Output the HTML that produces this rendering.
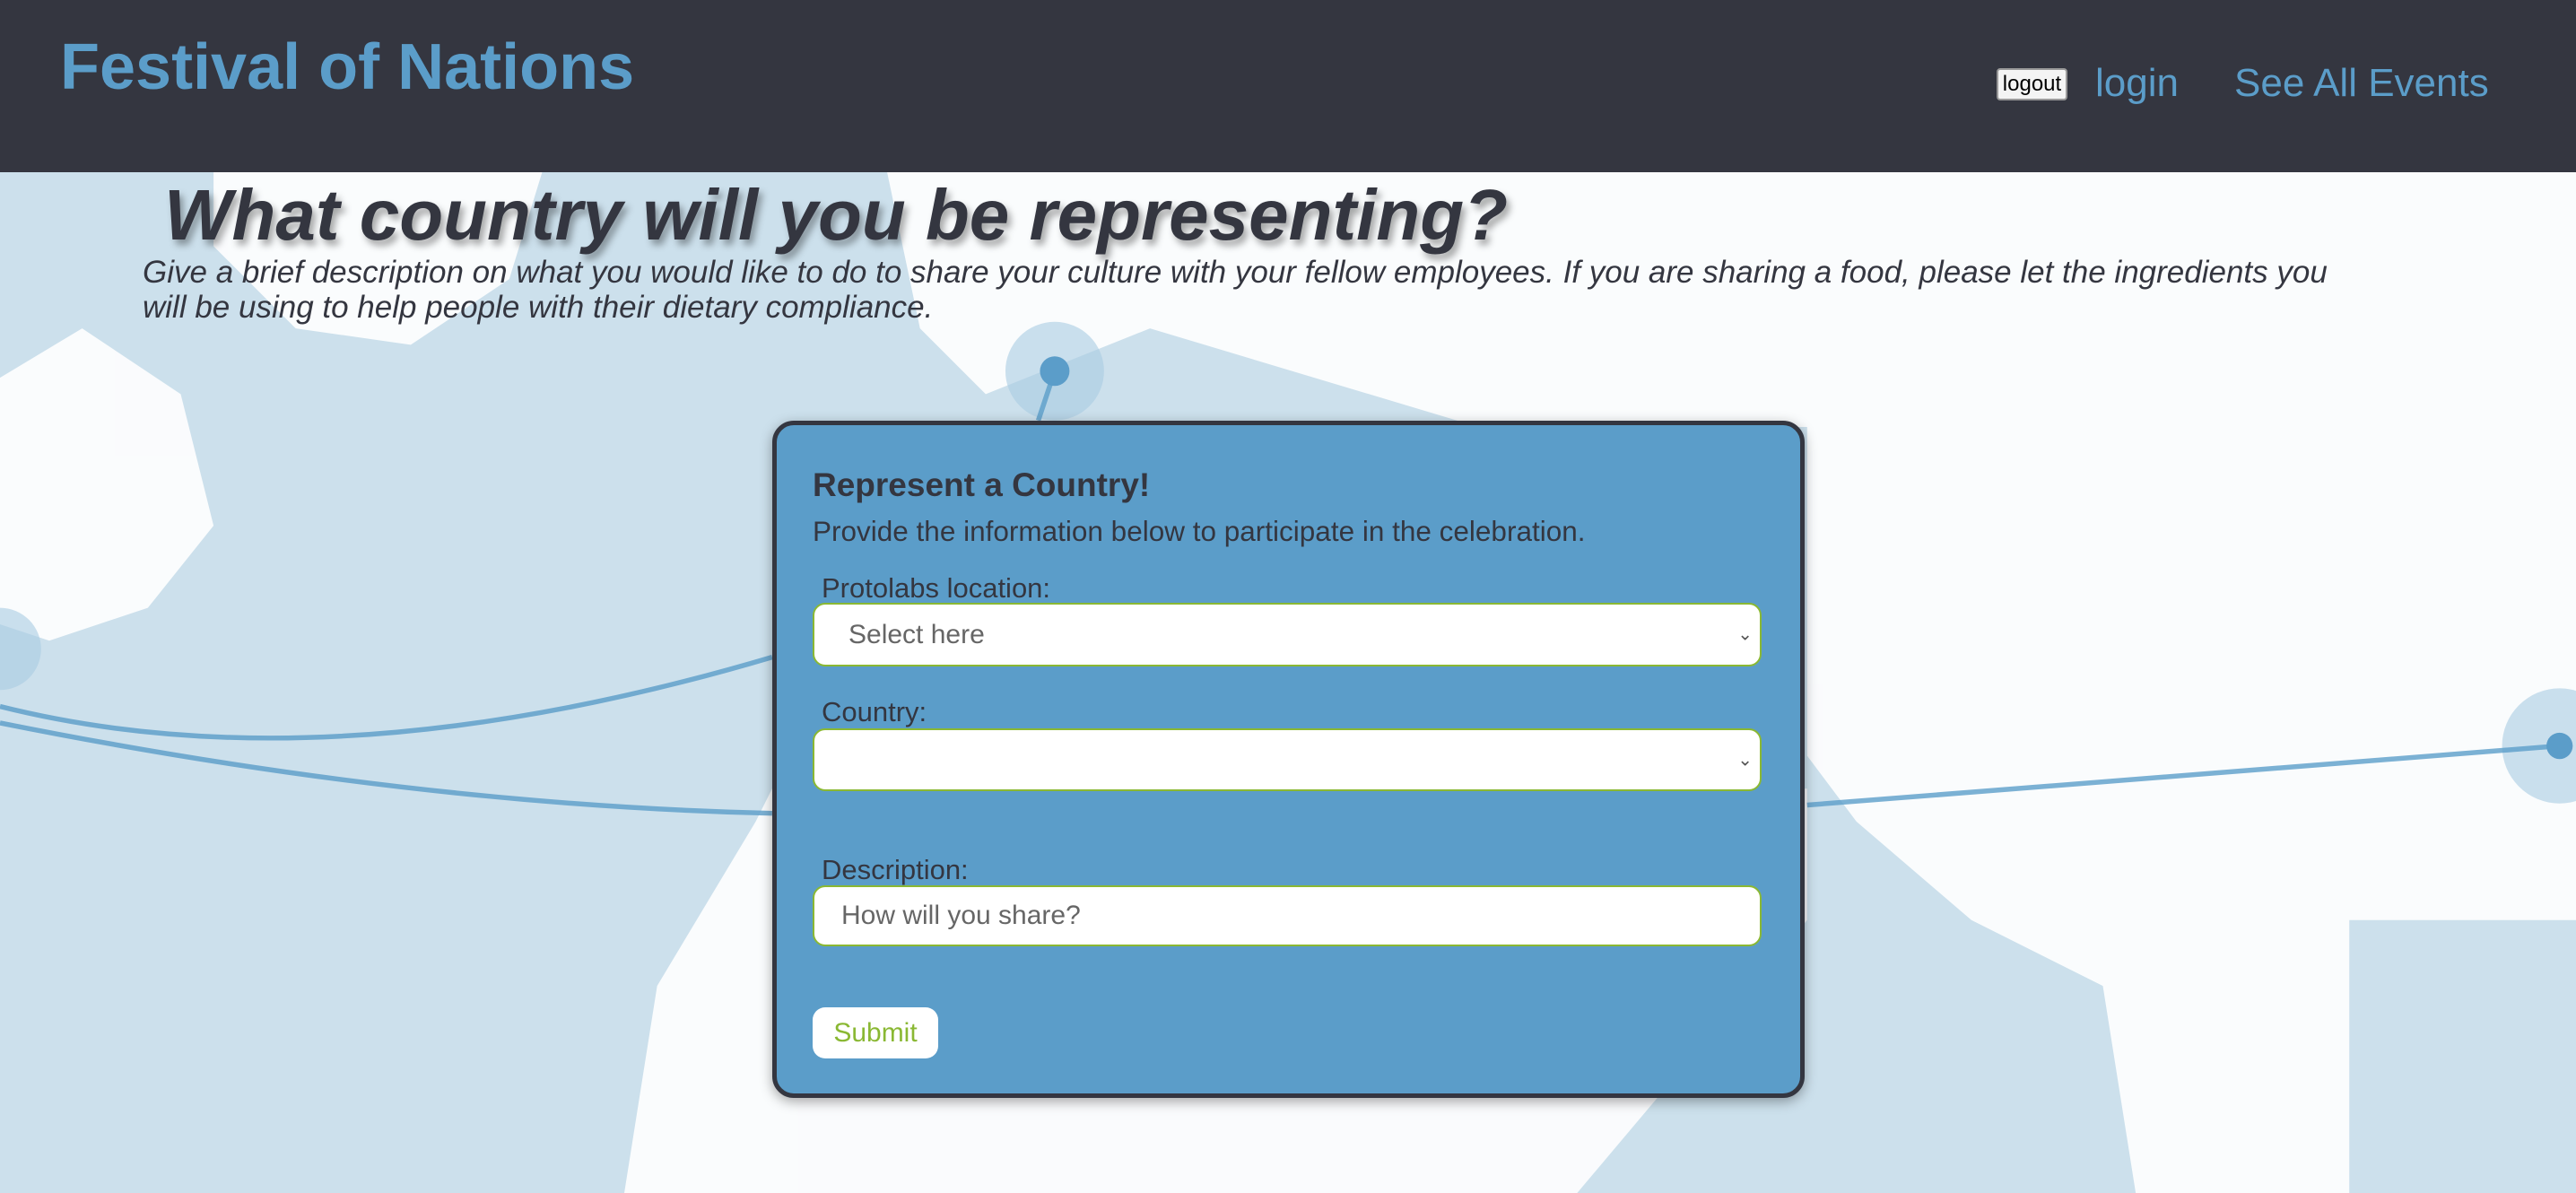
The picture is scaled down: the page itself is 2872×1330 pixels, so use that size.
<!DOCTYPE html>
<html><head><meta charset="utf-8"><style>
*{box-sizing:border-box;margin:0;padding:0}
body{width:2872px;height:1330px;overflow:hidden;font-family:"Liberation Sans",Arial,sans-serif;background:#cce0ec;position:relative}
.hdr{position:absolute;left:0;top:0;width:2872px;height:192px;background:#343640}
.title{position:absolute;left:67px;top:34px;font-size:72px;font-weight:bold;color:#5b9dc9}
.logout{position:absolute;left:2226px;top:76px;width:79px;height:36px;background:#f4f4f4;border:2px solid #999;border-radius:4px;font-size:24px;color:#000;text-align:center;line-height:32px}
.nav{position:absolute;top:68px;font-size:44px;color:#5b9dc9}
svg.map{position:absolute;left:0;top:192px}
h1{position:absolute;left:183px;top:194px;font-size:80px;font-style:italic;font-weight:bold;color:#343640;text-shadow:4px 6px 8px rgba(0,0,0,.35);white-space:nowrap}
.desc{position:absolute;left:159px;top:284px;width:2475px;font-size:35px;font-style:italic;color:#343640;line-height:39px}
.card{position:absolute;left:861px;top:469px;width:1151px;height:755px;background:#5b9dc9;border:5px solid #343640;border-radius:24px;box-shadow:0 4px 14px rgba(0,0,0,.35)}
.t{position:absolute;color:#343640}
.field{position:absolute;left:40px;width:1058px;background:#fff;border:2px solid #8ab833;border-radius:14px;font-size:30px;color:#666}
.chev{position:absolute;right:8px;top:50%;transform:translateY(-50%);font-size:20px;color:#555}
.sub{position:absolute;left:40px;top:649px;width:140px;height:57px;background:#fff;border-radius:14px;color:#8ab833;font-size:30px;text-align:center;line-height:57px}
</style></head><body>
<svg class="map" width="2872" height="1138" viewBox="0 105 1568 621" preserveAspectRatio="none">
<rect x="0" y="105" width="1568" height="621" fill="#cce0ec"/>
<g fill="#fff" opacity=".9">
<polygon points="130,105 330,105 310,170 250,210 180,200 130,150"/>
<polygon points="0,230 50,200 110,240 130,320 90,370 30,390 0,380"/>
<polygon points="540,105 1568,105 1568,560 1430,560 1430,726 1300,726 1280,600 1200,560 1130,500 1100,460 1100,260 900,260 700,200 600,240 560,200"/>
<polygon points="470,480 1100,480 1100,560 960,726 380,726 400,600 460,500"/>
</g>
<circle cx="642" cy="226" r="30" fill="#a9cbe2" opacity=".6"/>
<circle cx="0" cy="395" r="25" fill="#a9cbe2" opacity=".6"/>
<circle cx="1558" cy="454" r="35" fill="#a9cbe2" opacity=".6"/>
<g stroke="#5b9dc9" stroke-width="3" fill="none" opacity=".8">
<path d="M0,430 Q200,480 470,400"/>
<path d="M0,440 Q250,490 470,495"/>
<path d="M1100,490 L1558,454"/>
<path d="M642,226 L632,256"/>
</g>
<circle cx="642" cy="226" r="9" fill="#5b9dc9"/>
<circle cx="1558" cy="454" r="8" fill="#5b9dc9"/>
</svg>
<div class="hdr"></div>
<div class="title">Festival of Nations</div>
<div class="logout">logout</div>
<div class="nav" style="left:2336px">login</div>
<div class="nav" style="left:2491px">See All Events</div>
<h1>What country will you be representing?</h1>
<div class="desc">Give a brief description on what you would like to do to share your culture with your fellow employees. If you are sharing a food, please let the ingredients you will be using to help people with their dietary compliance.</div>
<div class="card">
<div class="t" style="left:40px;top:46px;font-size:37px;font-weight:bold">Represent a Country!</div>
<div class="t" style="left:40px;top:100px;font-size:31.5px">Provide the information below to participate in the celebration.</div>
<div class="t" style="left:50px;top:164px;font-size:31px">Protolabs location:</div>
<div class="field" style="top:198px;height:71px;padding-left:38px;line-height:67px">Select here<span class="chev">&#8964;</span></div>
<div class="t" style="left:50px;top:302px;font-size:31px">Country:</div>
<div class="field" style="top:338px;height:70px"><span class="chev">&#8964;</span></div>
<div class="t" style="left:50px;top:478px;font-size:31px">Description:</div>
<div class="field" style="top:513px;height:68px;padding-left:30px;line-height:64px">How will you share?</div>
<div class="sub">Submit</div>
</div>
</body></html>
